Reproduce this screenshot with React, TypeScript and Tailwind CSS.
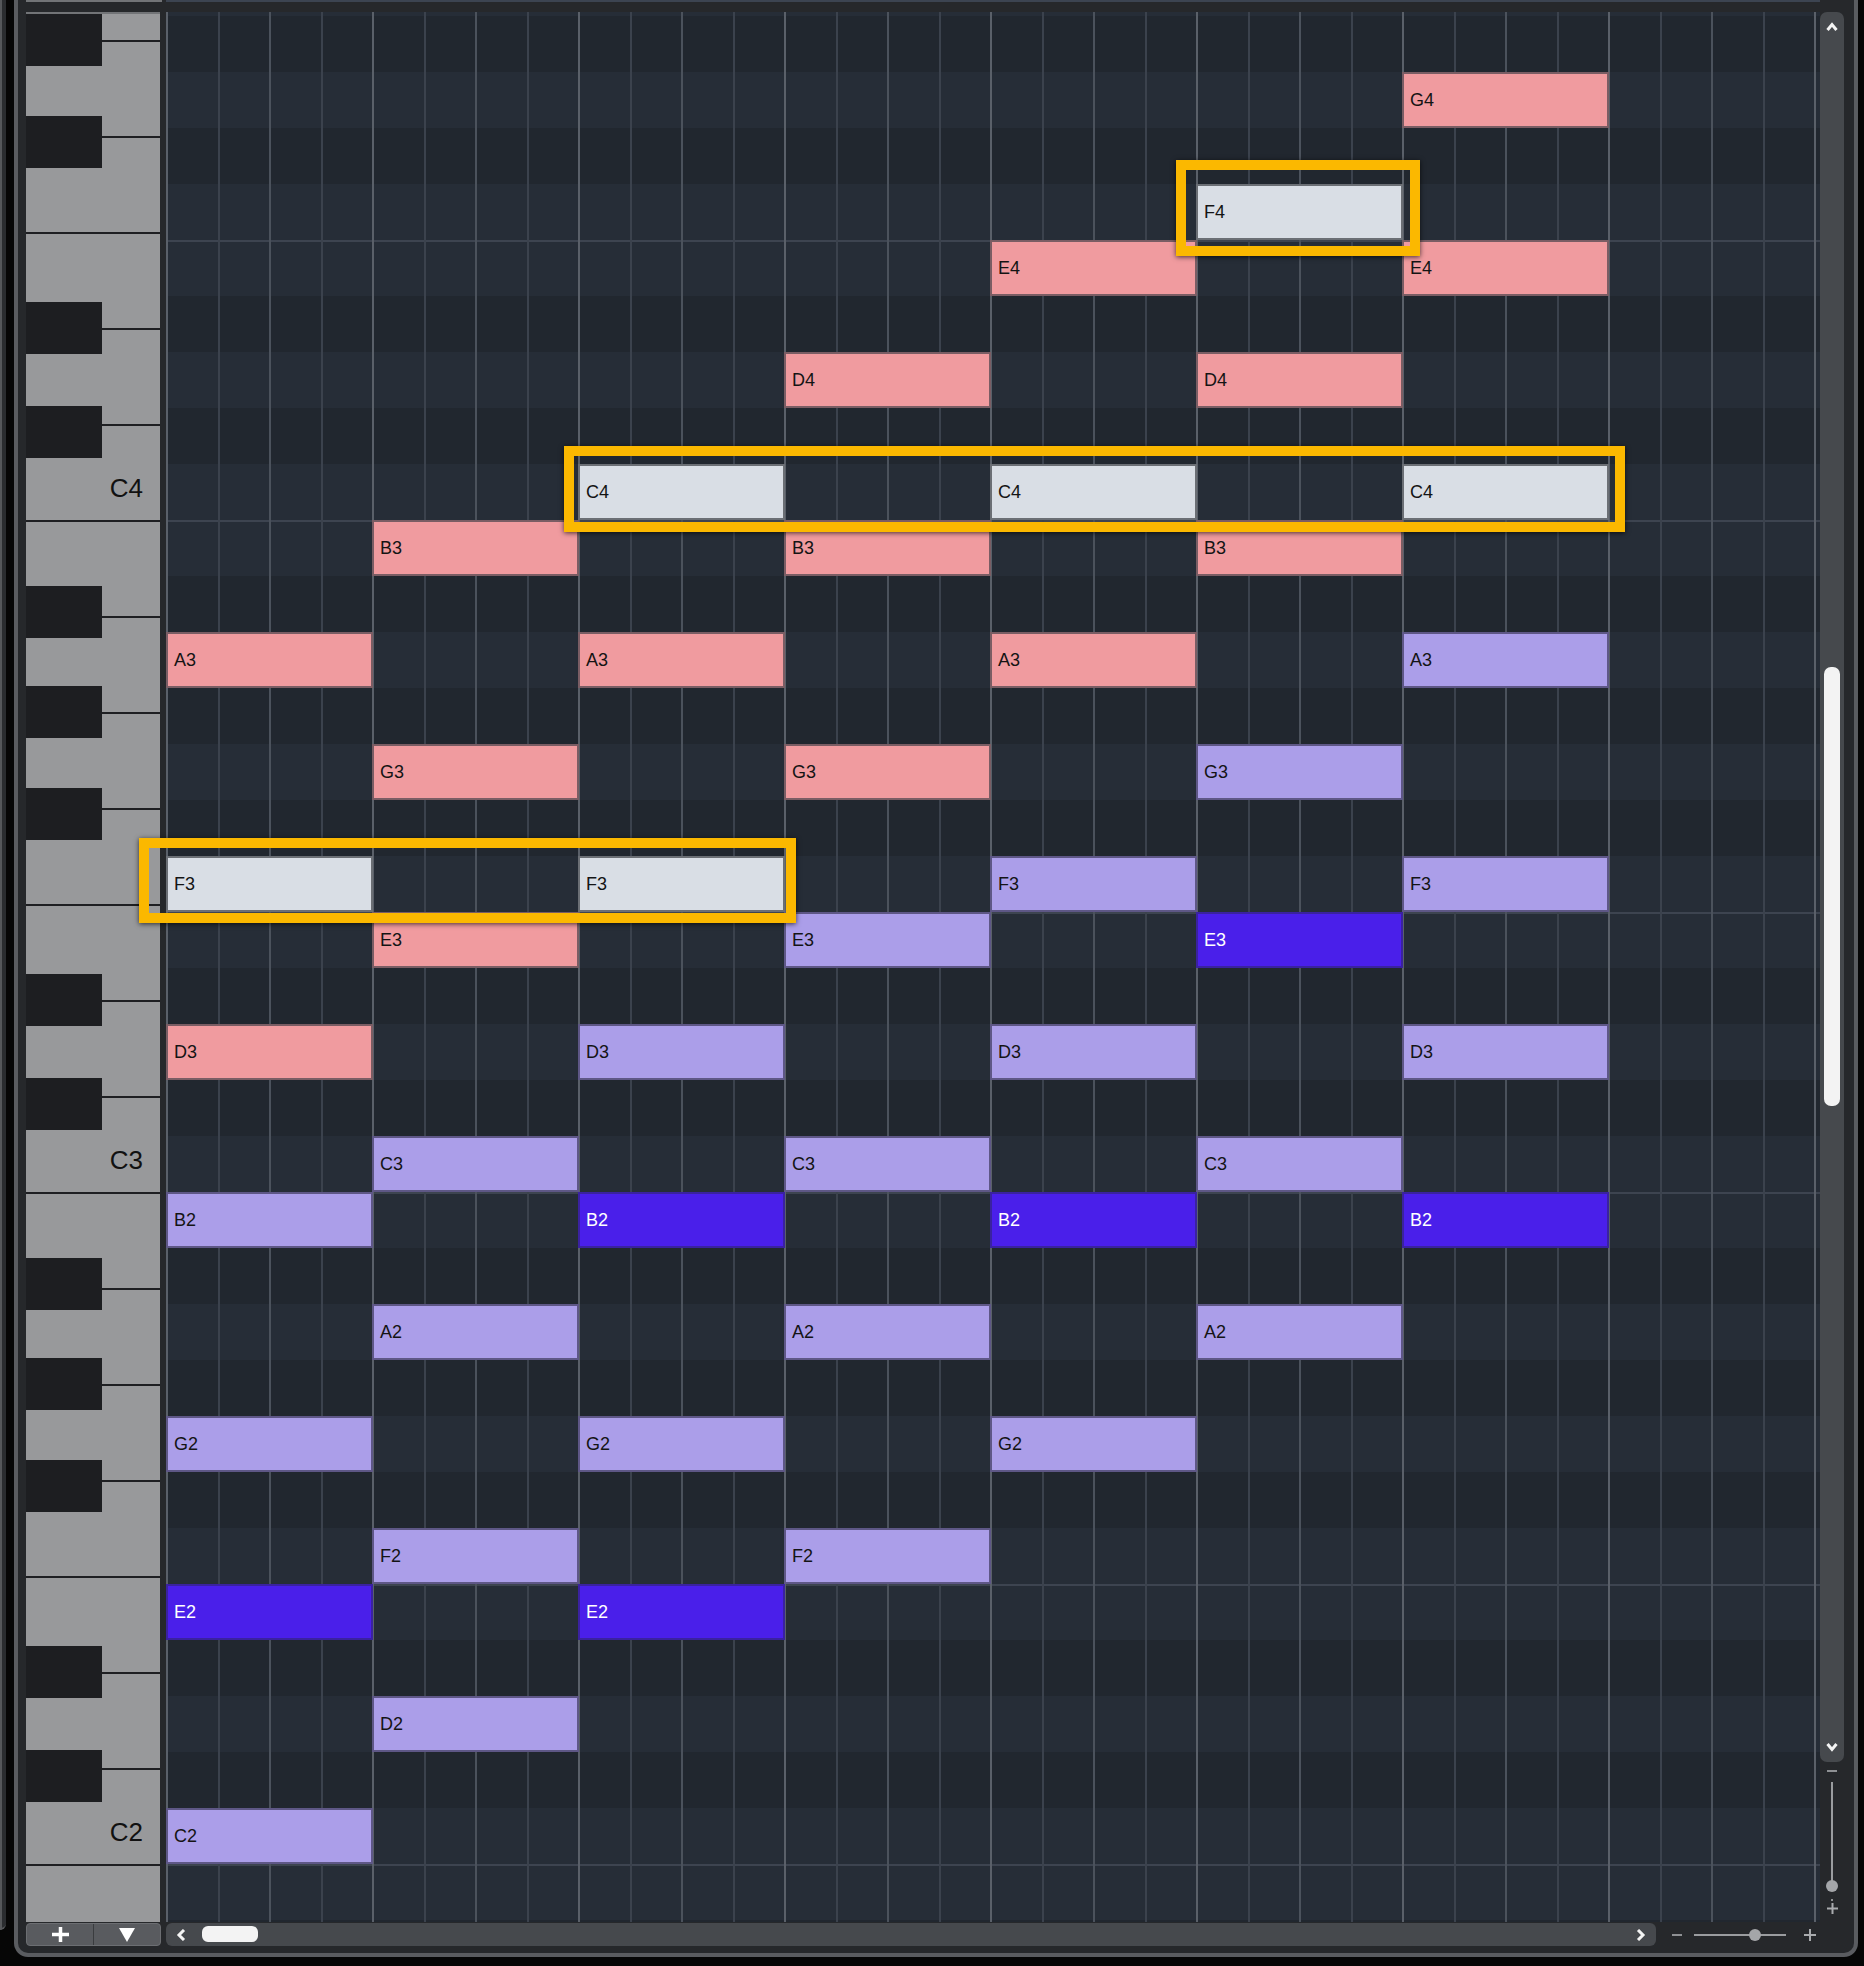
import React from "react";

type Kind = "p" | "l" | "b" | "w";

const NOTE_CLASS: Record<Kind, string> = {
  p: "bg-[#f09b9f] border-[#7a5d64] text-[#141414]",
  l: "bg-[#ab9ee9] border-[#5e5786] text-[#141414]",
  b: "bg-[#4a1fea] border-[#3a22a0] text-white",
  w: "bg-[#d9dee5] border-[#6b6f75] text-[#141414]",
};

const NOTES: [string, number, number, Kind][] = [
  ["G4", 67, 6, "p"],
  ["F4", 65, 5, "w"],
  ["E4", 64, 4, "p"], ["E4", 64, 6, "p"],
  ["D4", 62, 3, "p"], ["D4", 62, 5, "p"],
  ["C4", 60, 2, "w"], ["C4", 60, 4, "w"], ["C4", 60, 6, "w"],
  ["B3", 59, 1, "p"], ["B3", 59, 3, "p"], ["B3", 59, 5, "p"],
  ["A3", 57, 0, "p"], ["A3", 57, 2, "p"], ["A3", 57, 4, "p"], ["A3", 57, 6, "l"],
  ["G3", 55, 1, "p"], ["G3", 55, 3, "p"], ["G3", 55, 5, "l"],
  ["F3", 53, 0, "w"], ["F3", 53, 2, "w"], ["F3", 53, 4, "l"], ["F3", 53, 6, "l"],
  ["E3", 52, 1, "p"], ["E3", 52, 3, "l"], ["E3", 52, 5, "b"],
  ["D3", 50, 0, "p"], ["D3", 50, 2, "l"], ["D3", 50, 4, "l"], ["D3", 50, 6, "l"],
  ["C3", 48, 1, "l"], ["C3", 48, 3, "l"], ["C3", 48, 5, "l"],
  ["B2", 47, 0, "l"], ["B2", 47, 2, "b"], ["B2", 47, 4, "b"], ["B2", 47, 6, "b"],
  ["A2", 45, 1, "l"], ["A2", 45, 3, "l"], ["A2", 45, 5, "l"],
  ["G2", 43, 0, "l"], ["G2", 43, 2, "l"], ["G2", 43, 4, "l"],
  ["F2", 41, 1, "l"], ["F2", 41, 3, "l"],
  ["E2", 40, 0, "b"], ["E2", 40, 2, "b"],
  ["D2", 38, 1, "l"],
  ["C2", 36, 0, "l"],
];

const BLACK = new Set([1, 3, 6, 8, 10]);

const WHITE_KEYS = [
  "G4", "F4", "E4", "D4", "C4", "B3", "A3", "G3", "F3", "E3", "D3", "C3",
  "B2", "A2", "G2", "F2", "E2", "D2", "C2",
];

const BLACK_KEY_TOPS = [0, 102, 288, 392, 572, 672, 774, 960, 1064, 1244, 1344, 1446, 1632, 1736];

function Piano() {
  return (
    <div className="relative flex w-[134px] shrink-0 flex-col border-t-2 border-[#727477] bg-[#98999b]">
      <div className="h-[26px]" />
      {WHITE_KEYS.map((k) => (
        <div
          key={k}
          className="flex h-[96px] items-end justify-end border-t-2 border-[#1e1f22] pr-[17px] pb-[19px] text-[26px] leading-none text-[#111]"
        >
          {k.startsWith("C") ? k : ""}
        </div>
      ))}
      <div className="h-[58px] border-t-2 border-[#1e1f22]" />
      {BLACK_KEY_TOPS.map((t) => (
        <div key={t} className="absolute left-0 h-[52px] w-[76px] bg-[#1d1e21]" style={{ top: t }} />
      ))}
    </div>
  );
}

function Grid() {
  const rows: number[] = [];
  for (let m = 68; m >= 35; m--) rows.push(m);
  return (
    <div className="relative ml-[6px] h-[1910px] w-[1654px] shrink-0 overflow-hidden">
      <div className="flex flex-col">
        <div className="h-[4px] bg-[#262d37]" />
        {rows.map((m) => {
          const black = BLACK.has(m % 12);
          const line = m % 12 === 4 || m % 12 === 11;
          return (
            <div
              key={m}
              className={`h-[56px] ${black ? "bg-[#21272f]" : "bg-[#262d37]"} ${line ? "border-t-2 border-[#3d4450]" : ""}`}
            />
          );
        })}
        <div className="h-[2px] bg-[#21272f]" />
      </div>
      <div className="absolute inset-0 flex">
        {Array.from({ length: 32 }, (_, i) => (
          <div
            key={i}
            className={`w-[51.5px] shrink-0 border-l-2 ${
              i % 4 === 0 ? "border-[#5a6069]" : i % 2 === 0 ? "border-[#4b525c]" : "border-[#3b424d]"
            }`}
          />
        ))}
        <div className="w-[6px] shrink-0 border-l-2 border-[#5a6069]" />
      </div>
      {NOTES.map(([name, midi, bar, k]) => (
        <div
          key={name + bar}
          className={`absolute flex h-[56px] w-[207px] items-center border-2 pl-[6px] text-[18px] leading-none ${NOTE_CLASS[k]}`}
          style={{ left: bar * 206, top: 4 + (68 - midi) * 56 }}
        >
          {name}
        </div>
      ))}
    </div>
  );
}

function ChevronUp() {
  return (
    <svg width="12" height="9" viewBox="0 0 12 9">
      <polyline points="1.5,8 6,2.5 10.5,8" fill="none" stroke="#f4f4f4" strokeWidth="3" />
    </svg>
  );
}
function ChevronDown() {
  return (
    <svg width="12" height="9" viewBox="0 0 12 9">
      <polyline points="1.5,1 6,6.5 10.5,1" fill="none" stroke="#f4f4f4" strokeWidth="3" />
    </svg>
  );
}
function ChevronLeft() {
  return (
    <svg width="10" height="12" viewBox="0 0 10 12">
      <polyline points="8,1 3,6 8,11" fill="none" stroke="#f4f4f4" strokeWidth="3" />
    </svg>
  );
}
function ChevronRight() {
  return (
    <svg width="10" height="12" viewBox="0 0 10 12">
      <polyline points="2,1 7,6 2,11" fill="none" stroke="#f4f4f4" strokeWidth="3" />
    </svg>
  );
}
function Plus({ size = 12, color = "#a9abae", w = 2 }: { size?: number; color?: string; w?: number }) {
  return (
    <svg width={size} height={size} viewBox={`0 0 ${size} ${size}`}>
      <line x1={0} y1={size / 2} x2={size} y2={size / 2} stroke={color} strokeWidth={w} />
      <line x1={size / 2} y1={0} x2={size / 2} y2={size} stroke={color} strokeWidth={w} />
    </svg>
  );
}

function ScrollColumn() {
  return (
    <div className="flex w-[24px] shrink-0 flex-col">
      <div className="relative flex h-[1750px] flex-col items-center justify-between rounded-[7px] bg-[#46494d] pt-[10px] pb-[10px]">
        <ChevronUp />
        <ChevronDown />
        <div className="absolute left-[4px] top-[655px] h-[439px] w-[16px] rounded-[7px] bg-[#f3f3f3]" />
      </div>
      <div className="flex flex-col items-center">
        <div className="mt-[8px] h-[2px] w-[10px] bg-[#8e9093]" />
        <div className="relative mt-[10px] h-[108px] w-[2px] bg-[#9a9c9f]">
          <div className="absolute left-[-5px] top-[98px] h-[12px] w-[12px] rounded-full bg-[#a4a6a9]" />
        </div>
        <div className="mt-[9px] h-[2px] w-[2px] bg-[#8e9093]" />
        <div className="mt-[2px]">
          <Plus size={11} />
        </div>
      </div>
    </div>
  );
}

function BottomBar() {
  return (
    <div className="mt-[1px] flex h-[23px] items-center pl-[8px]">
      <div className="flex h-[23px] w-[135px] shrink-0 overflow-hidden rounded-[4px] border border-[#6c6e72] bg-[#595b5f]">
        <div className="flex w-[67px] items-center justify-center border-r border-[#3a3c3f]">
          <svg width="17" height="15" viewBox="0 0 17 15">
            <rect x="0" y="5.75" width="17" height="3.5" fill="#ffffff" />
            <rect x="6.75" y="0" width="3.5" height="15" fill="#ffffff" />
          </svg>
        </div>
        <div className="flex flex-1 items-center justify-center">
          <svg width="16" height="14" viewBox="0 0 16 14">
            <polygon points="0,0 16,0 8,14" fill="#ffffff" />
          </svg>
        </div>
      </div>
      <div className="relative ml-[5px] flex h-[23px] w-[1490px] shrink-0 items-center justify-between rounded-[6px] bg-[#46494d] px-[10px]">
        <ChevronLeft />
        <ChevronRight />
        <div className="absolute left-[36px] top-[3px] h-[16px] w-[56px] rounded-[6px] bg-[#f3f3f3]" />
      </div>
      <div className="ml-[16px] h-[2px] w-[10px] bg-[#8e9093]" />
      <div className="relative ml-[12px] h-[2px] w-[92px] bg-[#9a9c9f]">
        <div className="absolute left-[55px] top-[-5px] h-[12px] w-[12px] rounded-full bg-[#a4a6a9]" />
      </div>
      <div className="ml-[18px]">
        <Plus size={12} />
      </div>
    </div>
  );
}

export default function App() {
  return (
    <div className="flex h-[1966px] w-[1864px] overflow-hidden bg-[#060606] font-['Liberation_Sans',Arial,sans-serif]">
      <div className="w-[14px] shrink-0">
        <div className="h-[1930px] w-[6px] rounded-br-[6px] border-l-2 border-b-2 border-[#55575a] bg-[#2a2c2f]" />
      </div>
      <div className="relative flex h-[1957px] w-[1844px] shrink-0 flex-col rounded-b-[14px] border-x-4 border-b-4 border-[#5a5c60] bg-[#26282b]">
        <div className="flex h-[2px] pl-[8px]">
          <div className="w-[136px] bg-[#727477]" />
          <div className="ml-[4px] w-[1654px] bg-[#3c4451]" />
        </div>
        <div className="h-[10px]" />
        <div className="flex h-[1910px] pl-[8px]">
          <Piano />
          <Grid />
          <ScrollColumn />
        </div>
        <BottomBar />

        <div className="pointer-events-none absolute left-[1158px] top-[160px] h-[96px] w-[244px] border-[10px] border-[#fbb800] shadow-[0_1px_5px_rgba(0,0,0,0.7)]" />
        <div className="pointer-events-none absolute left-[546px] top-[446px] h-[86px] w-[1061px] border-[10px] border-[#fbb800] shadow-[0_1px_5px_rgba(0,0,0,0.7)]" />
        <div className="pointer-events-none absolute left-[121px] top-[838px] h-[85px] w-[657px] border-[10px] border-[#fbb800] shadow-[0_1px_5px_rgba(0,0,0,0.7)]" />
      </div>
    </div>
  );
}
